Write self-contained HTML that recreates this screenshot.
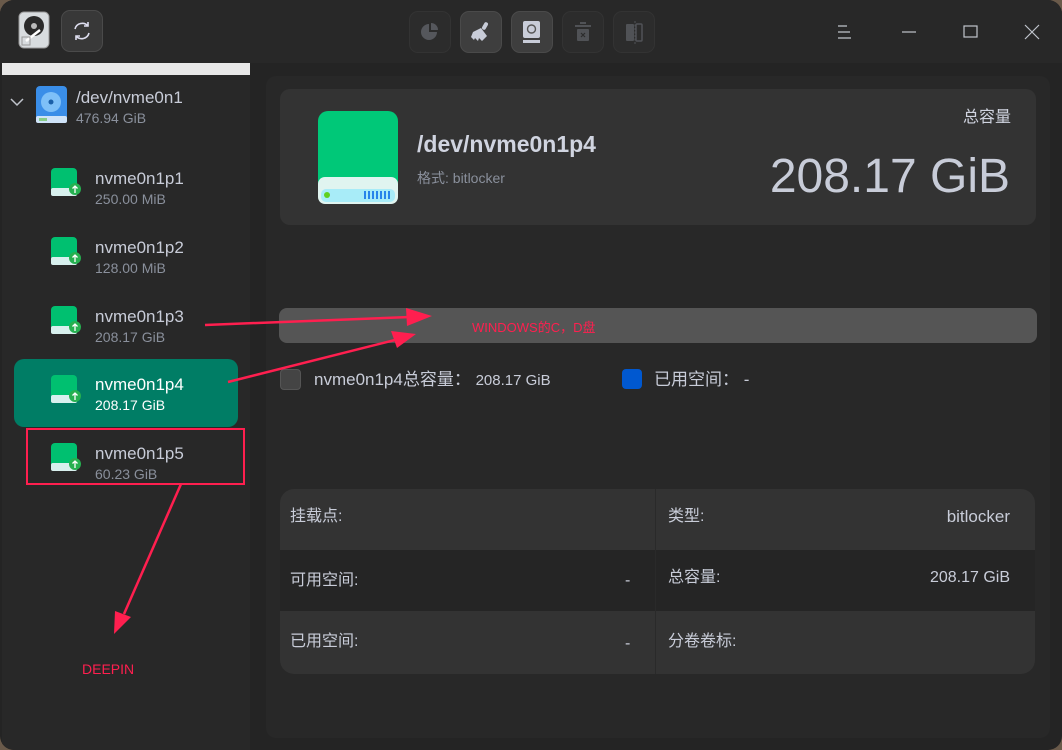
<!DOCTYPE html>
<html><head><meta charset="utf-8"><style>
*{margin:0;padding:0;box-sizing:border-box}
body{width:1062px;height:750px;background:#6a5a4a;font-family:"Liberation Sans","Noto Sans CJK SC",sans-serif;position:relative;overflow:hidden}
.win{position:absolute;left:0;top:0;width:1062px;height:750px;background:#242424;border-radius:14px;overflow:hidden}
.title{position:absolute;left:0;top:0;width:1062px;height:63px;background:#282828}
.btn{position:absolute;width:42px;height:42px;border-radius:9px;background:#2c2c2c;border:1px solid #333}
.btn.on{background:#3e3e3e;border-color:#4a4a4a}
.side{position:absolute;left:2px;top:63px;width:248px;height:687px;background:#282828}
.strip{position:absolute;left:2px;top:63px;width:248px;height:12px;background:#e8e8e8}
.a{position:absolute;color:#c8ccd8;line-height:1;white-space:nowrap}
.sub{color:#8a909c;font-size:14px}
.panel{position:absolute;left:266px;top:76px;width:784px;height:662px;background:#282828;border-radius:10px}
.card{position:absolute;left:280px;top:89px;width:756px;height:136px;background:#333;border-radius:10px}
.red{color:#ff1f4f}
.r{text-align:right}
</style></head><body>
<div class="win">
<div class="title"></div>
<svg style="position:absolute;left:18px;top:11px" width="32" height="38" viewBox="0 0 32 38"><rect x="1" y="1" width="30" height="36" rx="5" fill="#d8dcdf" stroke="#999"/><circle cx="16" cy="15" r="10" fill="#2a2a2a"/><circle cx="16" cy="15" r="3" fill="#bbb"/><line x1="8" y1="30" x2="22" y2="19" stroke="#fff" stroke-width="2.5"/><rect x="4" y="26" width="8" height="8" fill="none" stroke="#999"/></svg>
<div class="btn on" style="left:61px;top:10px;background:#383838"></div>
<svg style="position:absolute;left:70px;top:19px" width="24" height="24" viewBox="0 0 24 24" fill="none" stroke="#dde" stroke-width="1.6"><path d="M5 10a7.5 7.5 0 0 1 13-3"/><path d="M19 14a7.5 7.5 0 0 1-13 3"/><path d="M18 3v4h-4" /><path d="M6 21v-4h4"/></svg>
<div class="btn" style="left:409px;top:11px"></div>
<svg style="position:absolute;left:419px;top:21px" width="22" height="22" viewBox="0 0 22 22"><path d="M10 3a8 8 0 1 0 8 8h-8z" fill="#55575c"/><path d="M12 2v7h7a7 7 0 0 0-7-7z" fill="#55575c"/></svg>
<div class="btn on" style="left:460px;top:11px"></div>
<svg style="position:absolute;left:469px;top:20px" width="24" height="24" viewBox="0 0 24 24" fill="#c8ccd8"><rect x="14" y="2" width="4" height="8" rx="2" transform="rotate(30 16 6)"/><path d="M4 12l8-4 6 8-5 5-3-3-1 3-3-3-1 2-3-3z"/></svg>
<div class="btn on" style="left:511px;top:11px"></div>
<svg style="position:absolute;left:522px;top:20px" width="20" height="24" viewBox="0 0 20 24"><rect x="1" y="1" width="17" height="17" rx="2" fill="#c8ccd8"/><circle cx="9.5" cy="9" r="4" fill="none" stroke="#555" stroke-width="1.4"/><rect x="1" y="20" width="17" height="3" fill="#c8ccd8"/></svg>
<div class="btn" style="left:562px;top:11px"></div>
<svg style="position:absolute;left:574px;top:22px" width="18" height="20" viewBox="0 0 18 20"><rect x="1" y="3" width="16" height="2" fill="#505256"/><rect x="6" y="0" width="6" height="2" fill="#505256"/><rect x="3" y="7" width="12" height="12" rx="1" fill="#505256"/><path d="M7 11l4 4M11 11l-4 4" stroke="#2c2c2c" stroke-width="1.2"/></svg>
<div class="btn" style="left:613px;top:11px"></div>
<svg style="position:absolute;left:624px;top:21px" width="20" height="24" viewBox="0 0 20 24"><rect x="2" y="3" width="8" height="17" rx="1" fill="#505256"/><rect x="12" y="3" width="6" height="17" rx="1" fill="none" stroke="#505256" stroke-width="1.5"/><line x1="11" y1="0" x2="11" y2="24" stroke="#505256" stroke-dasharray="2 1.5"/></svg>
<svg style="position:absolute;left:837px;top:24px" width="16" height="16"><path d="M1 2h9M1 8h12M1 14h13" stroke="#c0c4cc" stroke-width="1.2"/></svg>
<svg style="position:absolute;left:901px;top:24px" width="16" height="16"><path d="M1 8h14" stroke="#c0c4cc" stroke-width="1.2"/></svg>
<svg style="position:absolute;left:963px;top:25px" width="16" height="16"><rect x="1" y="1" width="13" height="11" fill="none" stroke="#c0c4cc" stroke-width="1.2"/></svg>
<svg style="position:absolute;left:1024px;top:24px" width="16" height="16"><path d="M1 1l14 14M15 1L1 15" stroke="#c0c4cc" stroke-width="1.2"/></svg>

<div class="side"></div>
<div class="strip"></div>
<svg style="position:absolute;left:10px;top:97px" width="14" height="10"><path d="M1 2l6 6 6-6" fill="none" stroke="#c0c4cc" stroke-width="1.5"/></svg>
<svg style="position:absolute;left:35px;top:85px" width="33" height="40" viewBox="0 0 33 40"><rect x="1" y="1" width="31" height="37" rx="4" fill="#3a8ee8"/><circle cx="16" cy="17" r="10" fill="#7ec0f8"/><circle cx="16" cy="17" r="2.5" fill="#1a5fa8"/><rect x="1" y="31" width="31" height="7" rx="2" fill="#cfe3f8"/><rect x="4" y="33" width="8" height="3" fill="#8c8"/></svg>
<div class="a" style="left:76px;top:89px;font-size:17px">/dev/nvme0n1</div>
<div class="a sub" style="left:76px;top:111px">476.94 GiB</div>

<div style="position:absolute;left:14px;top:359px;width:224px;height:68px;background:#007d65;border-radius:10px"></div>
<div style="position:absolute;left:26px;top:428px;width:219px;height:57px;border:2px solid #ff1f4f"></div>

<svg style="position:absolute;left:0;top:0" width="260" height="500">
<defs><g id="d"><rect x="0" y="0" width="26" height="28" rx="4" fill="#00c070"/><rect x="0" y="20" width="26" height="8" rx="2" fill="#d8f0ee"/><circle cx="24" cy="21" r="6" fill="#26b050"/><path d="M24 25v-7M21.5 20.5l2.5-2.5 2.5 2.5" stroke="#fff" stroke-width="1.3" fill="none"/></g></defs>
<use href="#d" x="51" y="168"/><use href="#d" x="51" y="237"/><use href="#d" x="51" y="306"/><use href="#d" x="51" y="375"/><use href="#d" x="51" y="443"/>
</svg>
<div class="a" style="left:95px;top:170px;font-size:17px">nvme0n1p1</div><div class="a sub" style="left:95px;top:192px">250.00 MiB</div>
<div class="a" style="left:95px;top:239px;font-size:17px">nvme0n1p2</div><div class="a sub" style="left:95px;top:261px">128.00 MiB</div>
<div class="a" style="left:95px;top:308px;font-size:17px">nvme0n1p3</div><div class="a sub" style="left:95px;top:330px">208.17 GiB</div>
<div class="a" style="left:95px;top:376px;font-size:17px;color:#fff">nvme0n1p4</div><div class="a" style="left:95px;top:398px;font-size:14px;color:#fff">208.17 GiB</div>
<div class="a" style="left:95px;top:445px;font-size:17px">nvme0n1p5</div><div class="a sub" style="left:95px;top:467px">60.23 GiB</div>

<div class="panel"></div>
<div class="card"></div>
<svg style="position:absolute;left:318px;top:111px" width="80" height="93" viewBox="0 0 80 93"><rect x="0" y="0" width="80" height="92" rx="10" fill="#00c878"/><rect x="0" y="66" width="80" height="27" rx="7" fill="#e0f4f0"/><rect x="3" y="78" width="74" height="13" rx="5" fill="#a8ecf8"/><circle cx="9" cy="84" r="3" fill="#60d020"/><path d="M47 80v8M51 80v8M55 80v8M59 80v8M63 80v8M67 80v8M71 80v8" stroke="#1a78e8" stroke-width="1.8"/></svg>
<div class="a" style="left:417px;top:133px;font-size:23px;font-weight:bold;color:#d0d4e0">/dev/nvme0n1p4</div>
<div class="a sub" style="left:417px;top:171px;font-size:14px">格式: bitlocker</div>
<div class="a r" style="right:51px;top:110px;font-size:16px;color:#d0d4e0">总容量</div>
<div class="a r" style="right:52px;top:153px;font-size:48px;color:#c8ccd8">208.17 GiB</div>

<div style="position:absolute;left:279px;top:308px;width:758px;height:35px;background:#555;border-radius:8px"></div>
<div class="a red" style="left:472px;top:321px;font-size:13px">WINDOWS的C，D盘</div>
<div style="position:absolute;left:280px;top:369px;width:21px;height:21px;background:#444;border-radius:4px;border:1px solid #555"></div>
<div class="a" style="left:314px;top:371px;font-size:17px">nvme0n1p4总容量： <span style="font-size:15px">208.17 GiB</span></div>
<div style="position:absolute;left:622px;top:369px;width:20px;height:20px;background:#0058d0;border-radius:4px"></div>
<div class="a" style="left:654px;top:371px;font-size:17px">已用空间： -</div>

<div style="position:absolute;left:280px;top:489px;width:755px;height:185px;border-radius:14px;overflow:hidden">
<div style="height:61px;background:#333"></div><div style="height:61px;background:#252525"></div><div style="height:63px;background:#333"></div>
<div style="position:absolute;left:375px;top:0;width:1px;height:185px;background:#2a2a2a"></div>
</div>
<div class="a" style="left:290px;top:509px;font-size:16px">挂载点:</div>
<div class="a" style="left:668px;top:509px;font-size:16px">类型:</div>
<div class="a r" style="right:52px;top:508px;font-size:17px">bitlocker</div>
<div class="a" style="left:290px;top:573px;font-size:16px">可用空间:</div>
<div class="a" style="left:625px;top:573px;font-size:16px">-</div>
<div class="a" style="left:668px;top:570px;font-size:16px">总容量:</div>
<div class="a r" style="right:52px;top:570px;font-size:16px">208.17 GiB</div>
<div class="a" style="left:290px;top:634px;font-size:16px">已用空间:</div>
<div class="a" style="left:625px;top:636px;font-size:16px">-</div>
<div class="a" style="left:668px;top:634px;font-size:16px">分卷卷标:</div>

<div class="a red" style="left:82px;top:662px;font-size:14px">DEEPIN</div>
<svg style="position:absolute;left:0;top:0" width="1062" height="750">
<g stroke="#ff1f4f" stroke-width="2.5" fill="#ff1f4f">
<line x1="205" y1="325" x2="410" y2="317"/><polygon points="432,316 406,308 407,326" stroke="none"/>
<line x1="228" y1="382" x2="395" y2="340"/><polygon points="416,334 391,331 397,348" stroke="none"/>
<line x1="181" y1="484" x2="124" y2="614"/><polygon points="114,634 115,611 131,617" stroke="none"/>
</g></svg>
</div>
</body></html>
